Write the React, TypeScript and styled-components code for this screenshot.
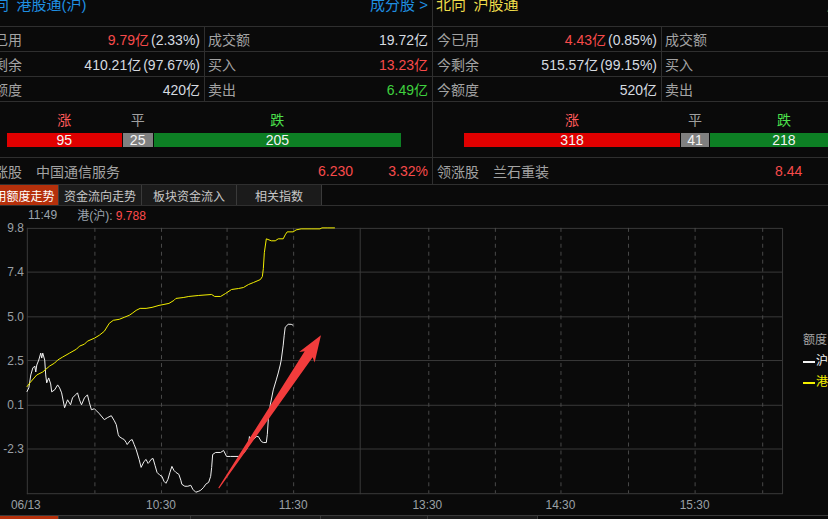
import React from 'react';
import styled, { createGlobalStyle } from 'styled-components';

const LINE = '#2f2f2f';
const GRID = '#3a3a3a';
const RED = '#f84a4a';
const GREEN = '#3fd13f';
const GRAY = '#a3a3a3';
const TEXT = '#d6dbe0';

const GlobalStyle = createGlobalStyle`
  html, body {
    margin: 0;
    padding: 0;
    background: #0a0a0a;
    overflow: hidden;
  }
  body {
    font-family: "Liberation Sans", "Noto Sans CJK SC", sans-serif;
  }
`;

const Page = styled.div`
  width: 828px;
  height: 519px;
  overflow: hidden;
  background: #0a0a0a;
  display: flex;
  flex-direction: column;
`;

const Panels = styled.div`
  display: flex;
  margin-left: -24px;
`;

const Panel = styled.section`
  width: 456px;
  flex-shrink: 0;
  border-right: 1px solid ${LINE};
  display: flex;
  flex-direction: column;
`;

const Header = styled.header<{ $tone: string }>`
  height: 26px;
  border-bottom: 1px solid ${LINE};
  display: flex;
  justify-content: space-between;
  align-items: flex-start;
  padding: 0 4px 0 3px;
  font-size: 15px;
  line-height: 16px;
  color: ${({ $tone }) => $tone};
  overflow: hidden;
  white-space: nowrap;

  span {
    margin-top: -3px;
  }
`;

const DataRow = styled.div`
  display: grid;
  grid-template-columns: 228px 1fr;
  height: 24px;
  border-bottom: 1px solid ${LINE};
  font-size: 14px;
  white-space: nowrap;
`;

const Cell = styled.div`
  display: flex;
  justify-content: space-between;
  align-items: center;
  padding: 0 4px 0 4px;

  & + & {
    border-left: 1px solid ${LINE};
    padding-left: 3px;
  }
`;

const Label = styled.span`
  color: ${GRAY};
`;

const Value = styled.span<{ $tone?: string }>`
  color: ${({ $tone }) => $tone || TEXT};

  em {
    font-style: normal;
    color: ${TEXT};
    margin-left: 2px;
  }
`;

const UpDown = styled.div`
  border-bottom: 1px solid ${LINE};
  padding: 10px 0 0 31px;
  box-sizing: border-box;
  height: 56px;
`;

const BarGroup = styled.div`
  width: 394px;
  display: flex;
  gap: 1px;
`;

const Segment = styled.div<{ $grow: number }>`
  flex: ${({ $grow }) => $grow} 1 0;
  min-width: 0;
  display: flex;
  flex-direction: column;
  text-align: center;
`;

const SegLabel = styled.div<{ $tone: string }>`
  height: 16px;
  line-height: 16px;
  font-size: 14px;
  color: ${({ $tone }) => $tone};
`;

const Bar = styled.div<{ $fill: string }>`
  margin-top: 5px;
  height: 14px;
  line-height: 14px;
  font-size: 14px;
  color: #f4f4f4;
  background: ${({ $fill }) => $fill};
`;

const Leader = styled.div`
  height: 26px;
  border-bottom: 1px solid ${LINE};
  display: flex;
  align-items: center;
  padding: 0 4px;
  font-size: 14px;
  white-space: nowrap;
  color: ${GRAY};
`;

const LeaderName = styled.span`
  margin-left: 14px;
  flex: 1;
`;

const LeaderPrice = styled.span`
  width: 60px;
  color: ${RED};
`;

const LeaderPct = styled.span`
  width: 50px;
  text-align: right;
  color: ${RED};
`;

const TabRow = styled.nav<{ $top?: boolean }>`
  display: flex;
  height: 20px;
  flex-shrink: 0;
  margin-left: -21px;
  ${({ $top }) => ($top ? `border-top: 1px solid ${GRID};` : `border-bottom: 1px solid ${LINE};`)}
`;

const Tab = styled.div<{ $w: number; $active?: boolean }>`
  width: ${({ $w }) => $w}px;
  box-sizing: border-box;
  border-right: 1px solid ${GRID};
  background: ${({ $active }) => ($active ? '#b5300b' : '#1b1b1b')};
  color: ${({ $active }) => ($active ? '#ffffff' : '#c8c8c8')};
  font-size: 12px;
  display: flex;
  align-items: center;
  justify-content: center;
  white-space: nowrap;
`;

const InfoRow = styled.div`
  height: 17px;
  display: flex;
  align-items: center;
  gap: 20px;
  padding-left: 28px;
  font-size: 12px;
  color: #9aa4ae;
  white-space: nowrap;

  b {
    font-weight: normal;
    color: #ff4a4a;
  }
`;

const ChartRow = styled.div`
  display: flex;
  height: 292px;
  flex-shrink: 0;
`;

const Legend = styled.div`
  padding: 107px 0 0 8px;
  font-size: 12px;
  line-height: 21px;
  white-space: nowrap;
  color: ${GRAY};
`;

const LegendItem = styled.div<{ $tone: string }>`
  display: flex;
  align-items: center;
  color: ${({ $tone }) => $tone};

  i {
    width: 12px;
    height: 2px;
    margin-right: 1px;
    background: currentColor;
  }
`;

type Val = { main: string; tone?: string; extra?: string };
type Row = [string, Val, string, Val];

const panels: {
  title: string;
  tone: string;
  rows: Row[];
  counts: [number, number, number];
  leader: { name: string; price: string; pct: string };
}[] = [
  {
    title: '南向\u2002港股通(沪)',
    tone: '#1f8fe0',
    rows: [
      ['今已用', { main: '9.79亿', tone: RED, extra: '(2.33%)' }, '成交额', { main: '19.72亿' }],
      ['今剩余', { main: '410.21亿', extra: '(97.67%)' }, '买入', { main: '13.23亿', tone: RED }],
      ['今额度', { main: '420亿' }, '卖出', { main: '6.49亿', tone: GREEN }],
    ],
    counts: [95, 25, 205],
    leader: { name: '中国通信服务', price: '6.230', pct: '3.32%' },
  },
  {
    title: '北向\u2002沪股通',
    tone: '#eedc4a',
    rows: [
      ['今已用', { main: '4.43亿', tone: RED, extra: '(0.85%)' }, '成交额', { main: '35.61亿' }],
      ['今剩余', { main: '515.57亿', extra: '(99.15%)' }, '买入', { main: '20.02亿', tone: RED }],
      ['今额度', { main: '520亿' }, '卖出', { main: '15.59亿', tone: GREEN }],
    ],
    counts: [318, 41, 218],
    leader: { name: '兰石重装', price: '8.44', pct: '10.03%' },
  },
];

const segStyle = [
  { label: '涨', tone: '#ff5a5a', fill: '#e00000' },
  { label: '平', tone: '#a0a0a0', fill: '#808080' },
  { label: '跌', tone: '#4ce04c', fill: '#0d7f24' },
];

const H_LINES = [227.5, 271.5, 316.5, 360.5, 405.5, 449.5, 494.5];
const Y_LABELS = ['9.8', '7.4', '5.0', '2.5', '0.1', '-2.3'];
const DASHED = [95, 162, 228, 295, 431, 498, 564, 632, 699, 767];
const SOLID = [27, 362, 787];
const TIMES = [
  { x: 26, t: '06/13' },
  { x: 162, t: '10:30' },
  { x: 295, t: '11:30' },
  { x: 430, t: '13:30' },
  { x: 564, t: '14:30' },
  { x: 699, t: '15:30' },
];

const yellowLine =
  '27,387 30,383 37,375 43,372 50,366 55,363 58,360 63,357 70,353 77,349 80,346 85,344 88,341 95,338 100,335 105,331 110,323 114,320 120,319 125,317 130,315 133,313 137,310 141,308 147,308 153,307 160,305 165,304 170,303 175,300 177,298 185,297 190,296 200,295 213,294 216,296 222,296 227,293 233,289 240,288 245,287 250,284 255,282 262,279 264,276 265,268 266,252 268,238 273,240 277,240 280,238 285,238 287,234 289,231 295,231 298,229 303,228 313,228 322,228 324,227 330,227 337,227';

const whiteLine =
  '27,392 29,388 31,375 33,368 35,366 36,372 37,365 39,360 41,353 42,358 43,353 45,360 46,375 47,383 49,378 51,384 52,392 55,390 58,385 60,388 62,393 65,408 68,400 71,405 73,398 76,395 78,393 80,400 82,405 85,398 88,395 90,403 92,410 95,409 97,411 100,414 105,420 108,418 112,416 115,421 117,425 119,435 120,437 123,439 125,440 127,443 128,445 131,441 133,440 135,445 137,450 140,460 142,468 145,462 147,460 149,464 150,463 152,460 154,459 156,466 158,473 161,476 163,477 165,482 167,484 169,480 171,473 173,467 175,471 177,473 180,475 182,481 183,485 186,487 189,487 192,486 194,490 197,493 200,492 202,491 205,488 207,485 210,483 212,477 213,468 214,455 217,453 222,453 225,451 228,457 232,457 240,457 244,455 248,450 250,445 251,437 253,440 255,440 258,437 260,437 263,442 265,443 268,443 269,435 270,420 272,405 275,390 278,380 280,373 282,365 283,360 285,345 286,335 287,327 290,324 293,324 295,325';

const arrow = '323,335 316.6,362.5 314.6,357.3 220.5,489.2 219.7,488.6 306.6,351.2 301,352';

function Chart() {
  return (
    <svg width={800} height={292} viewBox="0 0 800 292">
      <g transform="translate(0,-223)">
        {H_LINES.map((y) => (
          <line key={y} x1={27} x2={787} y1={y} y2={y} stroke={GRID} strokeWidth={1} />
        ))}
        {DASHED.map((x) => (
          <line key={x} x1={x + 0.5} x2={x + 0.5} y1={227} y2={494} stroke="#4a4a4a" strokeDasharray="4 4" />
        ))}
        {SOLID.map((x) => (
          <line key={x} x1={x + 0.5} x2={x + 0.5} y1={227} y2={495} stroke={GRID} />
        ))}
        <g fontFamily="Liberation Sans, sans-serif" fontSize={12} fill="#9aa0a6">
          {Y_LABELS.map((t, i) => (
            <text key={t} x={24} y={H_LINES[i] + 4} textAnchor="end">
              {t}
            </text>
          ))}
          {TIMES.map((s) => (
            <text key={s.t} x={s.x} y={510} textAnchor="middle">
              {s.t}
            </text>
          ))}
        </g>
        <polyline points={whiteLine} fill="none" stroke="#f2f2f2" strokeWidth={1} strokeLinejoin="round" />
        <polyline points={yellowLine} fill="none" stroke="#f4f000" strokeWidth={1} strokeLinejoin="round" />
        <polygon points={arrow} fill="#f23c3c" />
      </g>
    </svg>
  );
}

function ValueText({ v }: { v: Val }) {
  return (
    <Value $tone={v.tone}>
      {v.main}
      {v.extra && <em>{v.extra}</em>}
    </Value>
  );
}

export default function App() {
  return (
    <Page>
      <GlobalStyle />
      <Panels>
        {panels.map((p) => (
          <Panel key={p.title}>
            <Header $tone={p.tone}>
              <span>{p.title}</span>
              <span>成分股 &gt;</span>
            </Header>
            {p.rows.map((r) => (
              <DataRow key={r[0]}>
                <Cell>
                  <Label>{r[0]}</Label>
                  <ValueText v={r[1]} />
                </Cell>
                <Cell>
                  <Label>{r[2]}</Label>
                  <ValueText v={r[3]} />
                </Cell>
              </DataRow>
            ))}
            <UpDown>
              <BarGroup>
                {p.counts.map((c, i) => (
                  <Segment key={i} $grow={c}>
                    <SegLabel $tone={segStyle[i].tone}>{segStyle[i].label}</SegLabel>
                    <Bar $fill={segStyle[i].fill}>{c}</Bar>
                  </Segment>
                ))}
              </BarGroup>
            </UpDown>
            <Leader>
              领涨股
              <LeaderName>{p.leader.name}</LeaderName>
              <LeaderPrice>{p.leader.price}</LeaderPrice>
              <LeaderPct>{p.leader.pct}</LeaderPct>
            </Leader>
          </Panel>
        ))}
      </Panels>
      <TabRow>
        <Tab $w={80} $active>可用额度走势</Tab>
        <Tab $w={83}>资金流向走势</Tab>
        <Tab $w={95}>板块资金流入</Tab>
        <Tab $w={85}>相关指数</Tab>
      </TabRow>
      <InfoRow>
        <span>11:49</span>
        <span>
          港(沪): <b>9.788</b>
        </span>
      </InfoRow>
      <ChartRow>
        <Chart />
        <Legend>
          <div>额度</div>
          <LegendItem $tone="#f2f2f2">
            <i />沪
          </LegendItem>
          <LegendItem $tone="#f4f000">
            <i />港
          </LegendItem>
        </Legend>
      </ChartRow>
      <TabRow $top>
        <Tab $w={80} $active>港股通(沪)</Tab>
        <Tab $w={132}>港股通(深)</Tab>
        <Tab $w={130}>沪股通</Tab>
        <Tab $w={107}>深股通</Tab>
        <Tab $w={110}>AH股</Tab>
      </TabRow>
    </Page>
  );
}
